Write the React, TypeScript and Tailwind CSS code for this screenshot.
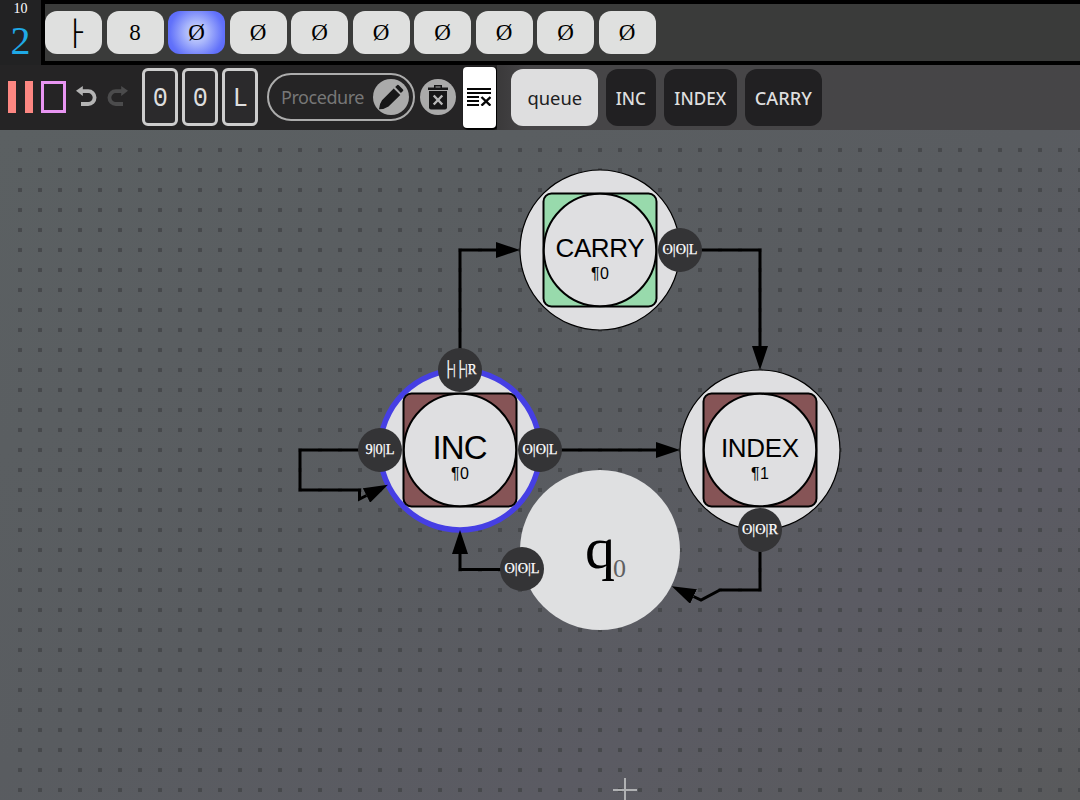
import React from "react";

const tape = ["├", "8", "Ø", "Ø", "Ø", "Ø", "Ø", "Ø", "Ø", "Ø"];

function Tape() {
  return (
    <div className="flex h-[65px] bg-[#222223]">
      <div className="flex w-[41px] shrink-0 flex-col items-center font-['Liberation_Serif',serif]">
        <span className="mt-[1px] text-[14px] leading-[15px] text-white">10</span>
        <span className="mt-[3px] text-[40px] leading-[44px] text-[#1fa9e6]">2</span>
      </div>
      <div className="flex flex-1 items-center gap-[4.5px] border-y-4 border-l-4 border-black bg-[#3a3b3a]">
        {tape.map((s, i) => (
          <div
            key={i}
            className={
              "flex h-[43px] w-[57px] shrink-0 items-center justify-center rounded-[12px] font-['Liberation_Serif',serif] text-[23px] leading-none text-black " +
              (i === 2
                ? "bg-[radial-gradient(circle,#d3dcfb_0%,#a9b6fb_32%,#6272fa_75%,#5663fa_100%)]"
                : "bg-[#dfe0df]")
            }
          >
            {i === 0 ? (
              <span className="ml-[3px] font-['Liberation_Mono',monospace] text-[26px]">{s}</span>
            ) : (
              <span className="pb-[1px]">{s}</span>
            )}
          </div>
        ))}
      </div>
    </div>
  );
}

function UndoIcon({ className }: { className: string }) {
  return (
    <svg width="21" height="22" viewBox="0 0 21 22" className={className}>
      <path d="M6 5.2h6.2a6.2 6.2 0 0 1 0 12.8H5" fill="none" stroke="currentColor" strokeWidth="3.8" />
      <path d="M0 4.8 6.8 0v10Z" fill="currentColor" />
    </svg>
  );
}

function Toolbar() {
  return (
    <div className="flex h-[65px] bg-[#464547]">
      <div className="flex w-[497px] shrink-0 items-start bg-[#252425]">
        <div className="mt-4 ml-2 flex h-8">
          <div className="w-2 bg-[#fd8782]" />
          <div className="ml-[9px] w-2 bg-[#fd8782]" />
          <div className="ml-2 w-[25px] border-[3px] border-[#e895f2]" />
        </div>
        <UndoIcon className="mt-[21px] ml-[10px] text-[#b4b4b4]" />
        <UndoIcon className="mt-[21px] ml-[10px] -scale-x-100 text-[#4b4b4c]" />
        <div className="mt-[3px] ml-[14px] flex gap-1">
          {["0", "0", "L"].map((s, i) => (
            <div
              key={i}
              className="flex h-[58px] w-9 items-center justify-center rounded-[6px] border-3 border-[#cdcdcd] bg-[#2b2a2c] pt-1 font-['Liberation_Mono',monospace] text-[28px] leading-none text-[#dedede]"
            >
              <span className="scale-x-90">{s}</span>
            </div>
          ))}
        </div>
        <div className="mt-2 ml-[9px] flex h-12 w-[148px] items-center justify-between rounded-full border-2 border-[#acacac] pr-[4px] pl-3">
          <span className="font-['Noto_Sans',sans-serif] text-[18px] tracking-[-0.45px] text-[#777]">Procedure</span>
          <svg width="36" height="36" viewBox="0 0 36 36" className="shrink-0">
            <circle cx="18" cy="18" r="18" fill="#aaa" />
            <path d="M6 30.2Q6.2 25 9 21.2L20.7 9.5 27.3 16 15.5 27.4Q11.5 30.2 6 30.2Z M22.2 8.1 24.3 6.1Q25 5.5 25.8 6.2L30 10.4Q30.7 11.2 30 12L27.9 14Z" fill="#171718" />
          </svg>
        </div>
        <svg width="36" height="36" viewBox="0 0 36 36" className="mt-[14px] ml-[5px] shrink-0">
          <circle cx="18" cy="18" r="18" fill="#aaa" />
          <path d="M8 11V8.5H14V6H22V8.5H28V11ZM15.5 7.5V8.5H20.5V7.5Z" fill="#171718" fillRule="evenodd" />
          <path d="M9 12h18v16.5a2 2 0 0 1-2 2H11a2 2 0 0 1-2-2Z" fill="#171718" />
          <path d="M13.7 16.5l8.6 9M22.3 16.5l-8.6 9" stroke="#b8b8b8" strokeWidth="2.4" />
        </svg>
        <div className="mt-[2px] ml-[7px] flex h-[61px] w-[33px] items-center justify-center rounded-[4px] bg-white shadow-[1px_1px_1px_1px_black]">
          <svg width="24" height="18" viewBox="0 0 24 18" className="-mt-px mr-px shrink-0">
            <path d="M0 1h24M0 5h24M0 9h12M0 13h12M0 17h12" stroke="#050505" strokeWidth="2" />
            <path d="m14.5 9 9 8.6M23.5 9l-9 8.6" stroke="#050505" strokeWidth="2.4" />
          </svg>
        </div>
      </div>
      <div className="flex flex-1 items-start gap-2 bg-linear-to-r from-[#3a393a] to-[#464547] to-[30px] pt-1 pl-[14px] font-['Noto_Sans',sans-serif] text-[18px] font-medium">
        <div className="flex h-[57px] w-[87px] items-center justify-center rounded-[12px] bg-[#dededf] pt-[2px] font-normal text-[#202022]"><span className="scale-x-[1.02]">queue</span></div>
        <div className="flex h-[57px] w-[50px] items-center justify-center rounded-[12px] bg-[#212022] pt-[2px] text-[#dededf]"><span className="scale-x-[.95]">INC</span></div>
        <div className="flex h-[57px] w-[73px] items-center justify-center rounded-[12px] bg-[#212022] pt-[2px] text-[#dededf]"><span className="scale-x-[.95]">INDEX</span></div>
        <div className="flex h-[57px] w-[77px] items-center justify-center rounded-[12px] bg-[#212022] pt-[2px] text-[#dededf]"><span className="scale-x-[1.01]">CARRY</span></div>
      </div>
    </div>
  );
}

type StateProps = { x: number; y: number; name: string; call: string; fill: string; size: number; width: number; active?: boolean };

function StateNode({ x, y, name, call, fill, size, width, active }: StateProps) {
  return (
    <g>
      <circle cx={x} cy={y} r={80} fill="#dfdfe1" stroke={active ? "#463fe4" : "#000"} strokeWidth={active ? 5.5 : 1.2} />
      <rect x={x - 56.5} y={y - 56.5} width="113" height="113" rx="8" fill={fill} stroke="#000" strokeWidth="2" />
      <circle cx={x} cy={y} r="56.2" fill="#dfdfe1" stroke="#000" strokeWidth="2" />
      <g className="font-['Liberation_Sans',sans-serif]" textAnchor="middle">
        <text x={x} y={y + (size > 30 ? 9 : 7)} fontSize={size} textLength={width}>{name}</text>
        <text x={x} y={y + 28.5} fontSize="16" textLength="18">{call}</text>
      </g>
    </g>
  );
}

function Rule({ x, y, text, width = 35 }: { x: number; y: number; text: string; width?: number }) {
  return (
    <g>
      <circle cx={x} cy={y} r="22" fill="#343436" />
      <text x={x} y={y + 4} textAnchor="middle" textLength={width} lengthAdjust="spacingAndGlyphs" fontSize="15" fill="#fff" stroke="#fff" strokeWidth=".25" className="font-['Liberation_Serif','DejaVu_Serif',serif]">
        {text}
      </text>
    </g>
  );
}

function Canvas() {
  return (
    <svg width="1080" height="670" viewBox="0 130 1080 670" className="block">
      <defs>
        <linearGradient id="canvas" x1="0" y1="0" x2="1" y2="1">
          <stop offset="0" stopColor="#5b6062" />
          <stop offset=".48" stopColor="#595c60" />
          <stop offset=".75" stopColor="#5b5b63" />
          <stop offset="1" stopColor="#595a5c" />
        </linearGradient>
        <pattern id="dots" x="10" y="140" width="20" height="20" patternUnits="userSpaceOnUse">
          <rect x="8" y="8" width="4" height="4" fill="#47494c" />
        </pattern>
        <marker id="arrow" markerUnits="userSpaceOnUse" markerWidth="24" markerHeight="16" refX="0" refY="8" orient="auto">
          <path d="M0 0 24 8 0 16Z" />
        </marker>
      </defs>
      <rect y="130" width="1080" height="670" fill="url(#canvas)" />
      <rect x="10" y="140" width="1070" height="660" fill="url(#dots)" />
      <circle cx="600" cy="550" r="80" fill="#dfe0e1" />
      <StateNode x={460} y={450} name="INC" call="¶0" fill="#865456" size={33} width={55} active />
      <StateNode x={600} y={250} name="CARRY" call="¶0" fill="#98daac" size={26} width={89} />
      <StateNode x={760} y={450} name="INDEX" call="¶1" fill="#865456" size={26} width={78} />
      <g fill="none" stroke="#000" strokeWidth="3">
        <path d="M460 370V250H496" markerEnd="url(#arrow)" />
        <path d="M680 250H760V346" markerEnd="url(#arrow)" />
        <path d="M540 450H656" markerEnd="url(#arrow)" />
        <path d="M522 569.5H460V554" markerEnd="url(#arrow)" />
        <path d="M760 530V590H720L701 600 693.5 596.5" markerEnd="url(#arrow)" />
        <path d="M380 450H300V490H359.5V499L366.5 495.5" markerEnd="url(#arrow)" />
      </g>
      <g className="font-['Liberation_Serif',serif]">
        <text x="585" y="568" fontSize="60">q</text>
        <text x="613" y="577" fontSize="26" fill="#606062">0</text>
      </g>
      <Rule x={460} y={370} text="├|├|R" width={33} />
      <Rule x={380} y={450} text="9|0|L" width={29} />
      <Rule x={540} y={450} text="ʘ|ʘ|L" />
      <Rule x={680} y={250} text="ʘ|ʘ|L" />
      <Rule x={760} y={530} text="ʘ|ʘ|R" width={36} />
      <Rule x={522} y={569} text="ʘ|ʘ|L" />
      <path d="M613 790h24M625 778v22" stroke="#b0b1b3" strokeWidth="2" />
    </svg>
  );
}

export default function App() {
  return (
    <main className="h-[800px] w-[1080px] overflow-hidden bg-[#5b5d60]">
      <Tape />
      <Toolbar />
      <Canvas />
    </main>
  );
}
